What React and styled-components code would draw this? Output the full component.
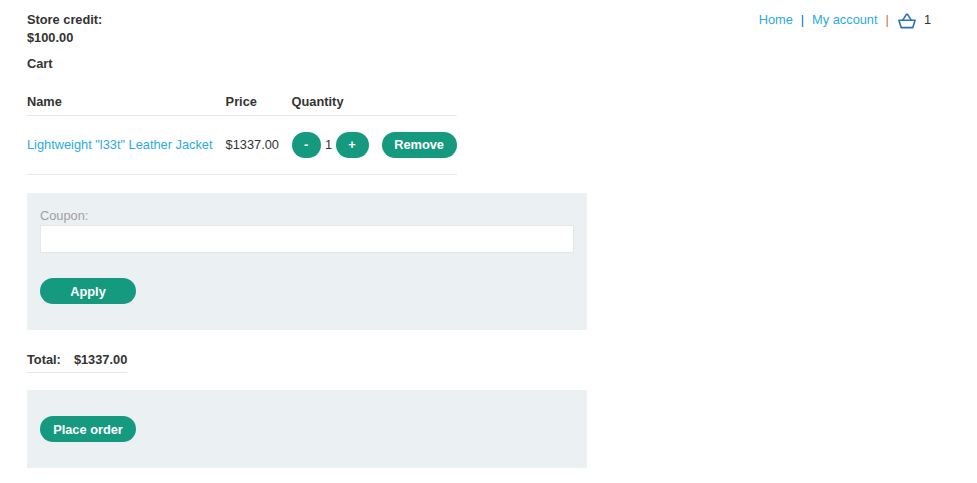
import React from 'react';
import styled, { createGlobalStyle } from 'styled-components';

const Global = createGlobalStyle`
  html, body { margin: 0; padding: 0; background: #fff; }
  body { font-family: "Liberation Sans", Arial, sans-serif; font-size: 12.8px; line-height: 18px; color: #333332; }
`;
const Page = styled.div`position: relative; padding: 11px 27px 15px; width: 977px; height: 483px; box-sizing: border-box; overflow: hidden;`;
const TopRow = styled.div`display: flex; justify-content: space-between; align-items: flex-start; padding-right: 19px;`;
const Credit = styled.div`font-weight: 700; line-height: 18px;`;
const Nav = styled.nav`display: flex; align-items: center; height: 18px; color: #0071bc;`;
const NavLink = styled.a`color: #29abe2; text-decoration: none;`;
const Sep = styled.span`margin: 0 ${p => p.$after}px 0 8px; color: ${p => p.$c};`;
const Count = styled.span`margin-left: 8px; color: #333332;`;
const Title = styled.div`font-weight: 700; margin-top: 8px; line-height: 18px;`;
const Table = styled.table`border-collapse: collapse; width: 430px; margin-top: 20px; table-layout: fixed;`;
const Th = styled.th`text-align: left; padding: 0 0 4px; height: 18px; font-weight: 700; border-bottom: 1px solid #e6e6e6; width: ${p => p.$w}px;`;
const Td = styled.td`padding: 16px 0; height: 26px; border-bottom: 1px solid #e6e6e6; white-space: nowrap;`;
const ItemLink = styled.a`color: #29abe2; text-decoration: none;`;
const Button = styled.button`
  border: 0; background: #159a7f; color: #fff; font: 700 12.8px/26px "Liberation Sans", Arial, sans-serif;
  height: 26px; border-radius: 13px; padding: ${p => (p.$low ? '1px 0 0' : '0')}; width: ${p => p.$w}px; text-align: center; display: block;
`;
const Qty = styled.div`display: flex; align-items: center;`;
const QtyValue = styled.span`width: 15px; padding-left: 1px; box-sizing: border-box; text-align: center; flex: none;`;
const Spacer = styled.div`width: 13px; flex: none;`;
const Panel = styled.div`background: #ebf0f2; width: 560px; box-sizing: border-box; padding: ${p => p.$pad}; margin-top: ${p => p.$top}px;`;
const Label = styled.label`display: block; color: #a0a0a0; line-height: 18px; height: 18px;`;
const Input = styled.input`display: block; box-sizing: border-box; width: 534px; height: 28px; background: #fff; border: 1px solid #e6e6e6; margin: 0 0 25px; padding: 0;`;
const Totals = styled.div`display: inline-flex; gap: 13px; font-weight: 700; margin-top: 21px; padding-bottom: 3px; border-bottom: 1px solid #e6e6e6; line-height: 18px;`;
const Basket = () => (
  <svg width="18" height="16" viewBox="0 0 18 16" fill="none" stroke="#2a70b8" strokeWidth="1.6" strokeLinejoin="round" strokeLinecap="round" style={{ margin: '1px 0 0 0' }}>
    <path d="M.9 7.2h16.2l-2.3 7.4H3.2z" />
    <path d="M4.8 7.2l3.6-5.8h1.2l3.6 5.8" />
  </svg>
);

export default function App() {
  return (
    <Page>
      <Global />
      <TopRow>
        <Credit>Store credit:<br />$100.00</Credit>
        <Nav>
          <NavLink>Home</NavLink><Sep $c="#0071bc" $after={8}>|</Sep>
          <NavLink>My account</NavLink><Sep $c="#b8763a" $after={9}>|</Sep>
          <Basket /><Count>1</Count>
        </Nav>
      </TopRow>
      <Title>Cart</Title>
      <Table>
        <thead>
          <tr><Th $w={198.6}>Name</Th><Th $w={66}>Price</Th><Th $w={90.4}>Quantity</Th><Th $w={75}></Th></tr>
        </thead>
        <tbody>
          <tr>
            <Td><ItemLink>Lightweight "l33t" Leather Jacket</ItemLink></Td>
            <Td>$1337.00</Td>
            <Td colSpan={2}>
              <Qty>
                <Button $w={29}>-</Button><QtyValue>1</QtyValue><Button $w={33}>+</Button>
                <Spacer /><Button $w={75}>Remove</Button>
              </Qty>
            </Td>
          </tr>
        </tbody>
      </Table>
      <Panel $top={18} $pad="14px 13px 26px">
        <Label>Coupon:</Label>
        <Input />
        <Button $w={96} $low>Apply</Button>
      </Panel>
      <Totals><span>Total:</span><span>$1337.00</span></Totals>
      <Panel $top={17} $pad="26px 13px">
        <Button $w={96} $low>Place order</Button>
      </Panel>
    </Page>
  );
}
